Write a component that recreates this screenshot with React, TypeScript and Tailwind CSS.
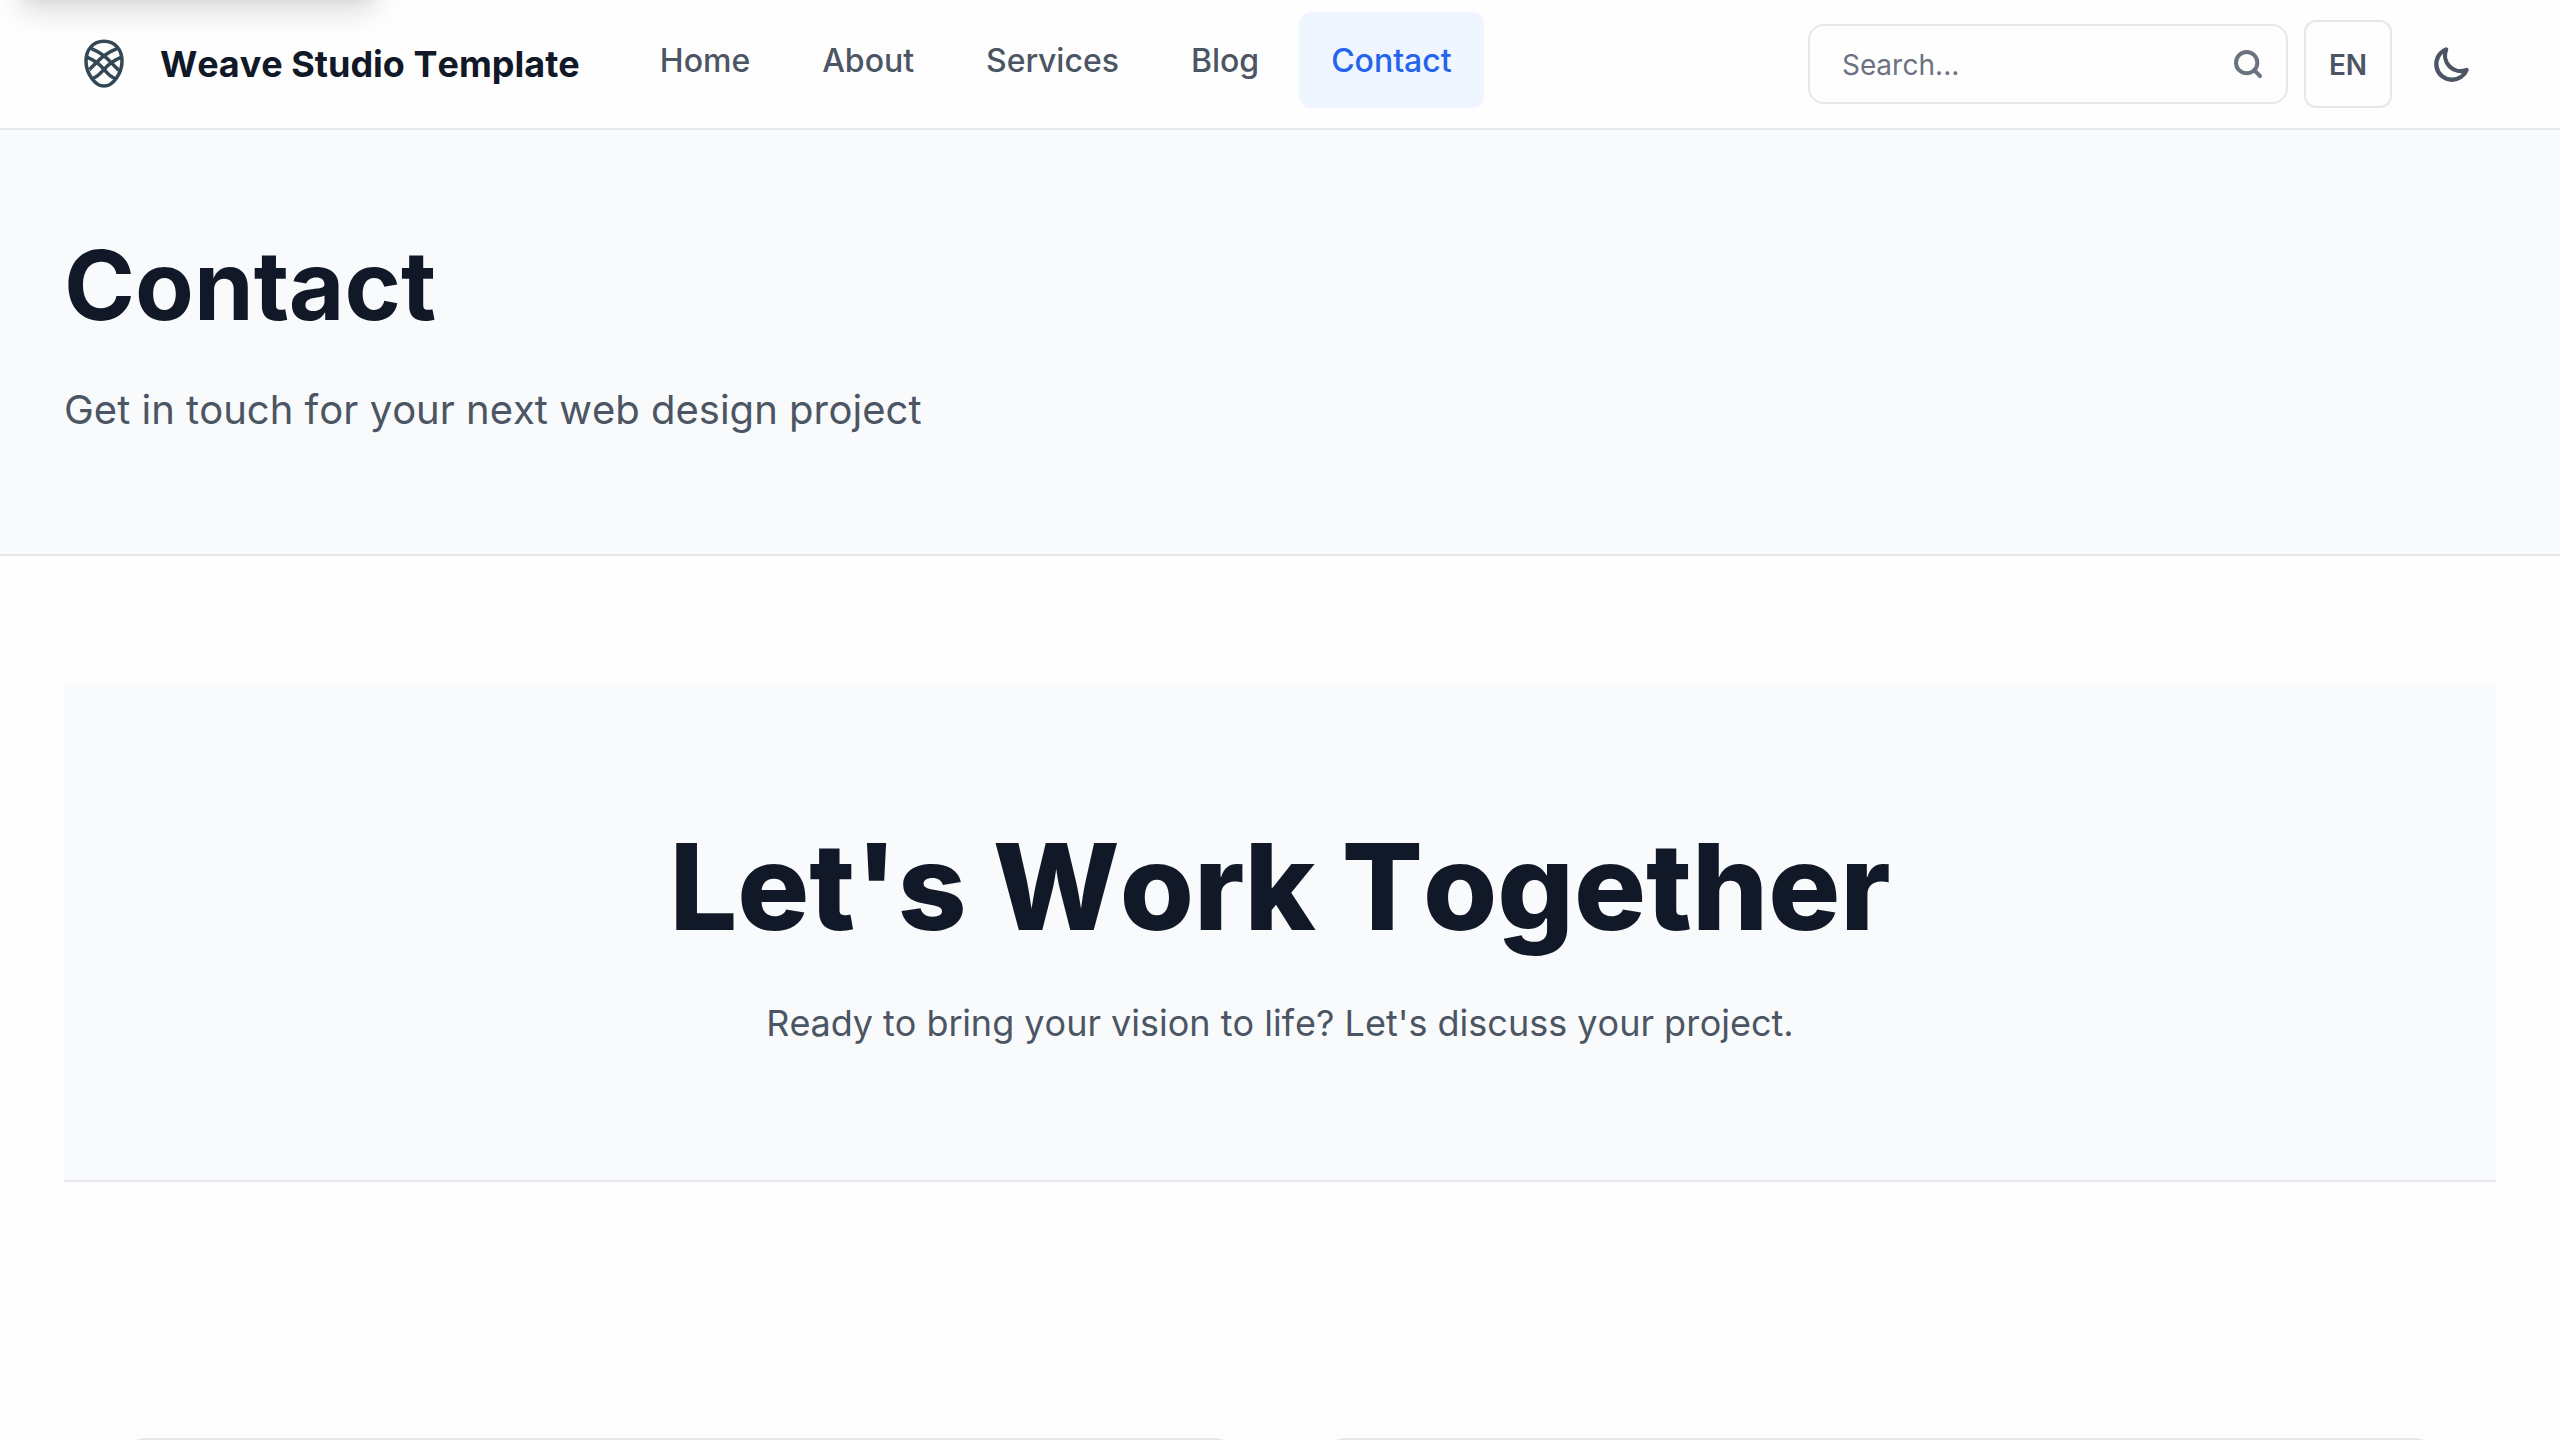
import React from "react";

const links = ["Home", "About", "Services", "Blog"];

function WeaveLogo() {
  return (
    <svg width="90" height="90" viewBox="0 0 270 270" className="mt-0.5 h-[90px] w-[90px] shrink-0" fill="none" stroke="#344755" strokeWidth="10.5">
      <path d="M132 64C165 64 186 88 186 124C186 160 159 198 132 198C105 198 78 160 78 124C78 88 99 64 132 64Z" />
      <path d="M94 86Q128 100 153 127T180 151" />
      <path d="M82 112Q112 124 132 148T165 175" />
      <path d="M171 86Q136 100 110 127T85 151" />
      <path d="M183 112Q153 124 132 148T98 175" />
    </svg>
  );
}

export default function App() {
  return (
    <div className="relative h-[1440px] w-[2560px] overflow-hidden bg-[#fefefe] font-['Inter',sans-serif] text-[#111827] [font-kerning:none]">
      <header className="flex h-[130px] items-center border-b-2 border-[#e5e7eb] pr-16 pl-[60px]">
        <WeaveLogo />
        <span className="ml-[10px] text-[36px] font-bold whitespace-nowrap">Weave Studio Template</span>
        <nav className="mt-3 ml-12 flex h-24 gap-2 self-start text-[32px] font-medium text-[#4b5563]">
          {links.map((l) => (
            <a key={l} className="flex items-center rounded-xl px-8 pt-0.5">{l}</a>
          ))}
          <a className="flex items-center rounded-xl bg-[#eff6ff] px-8 pt-0.5 text-[#2563eb]">Contact</a>
        </nav>
        <div className="ml-auto flex items-center gap-4">
          <div className="flex h-20 w-[480px] items-center justify-between rounded-2xl border-2 border-[#e5e7eb] pr-[22px] pl-8 text-[28px] text-[#6b7280]">
            <span className="pt-0.5">Search...</span>
            <svg width="32" height="32" viewBox="0 0 24 24" fill="none" stroke="currentColor" strokeWidth="3" strokeLinecap="round">
              <circle cx="11" cy="11" r="8" />
              <path d="m21 21-4.35-4.35" />
            </svg>
          </div>
          <button className="h-[88px] w-[88px] rounded-xl border-2 border-[#e5e7eb] pt-0.5 text-[28px] font-semibold text-[#4b5563]">EN</button>
          <button className="flex h-[88px] w-[88px] items-center justify-center text-[#4b5563]">
            <svg width="42" height="42" viewBox="0 0 24 24" fill="none" stroke="currentColor" strokeWidth="2.45" strokeLinecap="round" strokeLinejoin="round">
              <path d="M20.354 15.354A9 9 0 018.646 3.646 9.003 9.003 0 0012 21a9.003 9.003 0 008.354-5.646z" />
            </svg>
          </button>
        </div>
      </header>
      <section className="h-[426px] border-b-2 border-[#e5e7eb] bg-[#f9fafb] px-16 pt-24">
        <h1 className="text-[96px] leading-[118px] font-bold">Contact</h1>
        <p className="mt-[34px] text-[40px] leading-[64px] text-[#4b5563]">Get in touch for your next web design project</p>
      </section>
      <main className="px-16 pt-32">
        <section className="h-[498px] border-b-2 border-[#e5e7eb] bg-[#f9fafb] pt-32 text-center">
          <h2 className="text-[120px] leading-[150px] font-extrabold">Let's Work Together</h2>
          <p className="mt-8 text-[36px] leading-[58px] text-[#4b5563]">Ready to bring your vision to life? Let's discuss your project.</p>
        </section>
        <div className="mx-16 mt-64 grid grid-cols-2 gap-24">
          <div className="h-80 rounded-2xl border-2 border-[#e5e7eb]" />
          <div className="h-80 rounded-2xl border-2 border-[#e5e7eb]" />
        </div>
      </main>
      <div className="absolute -top-[84px] left-4 h-20 w-[364px] rounded-lg bg-white shadow-[0_20px_30px_-6px_rgba(0,0,0,0.15),0_8px_12px_-4px_rgba(0,0,0,0.05)]" />
    </div>
  );
}
